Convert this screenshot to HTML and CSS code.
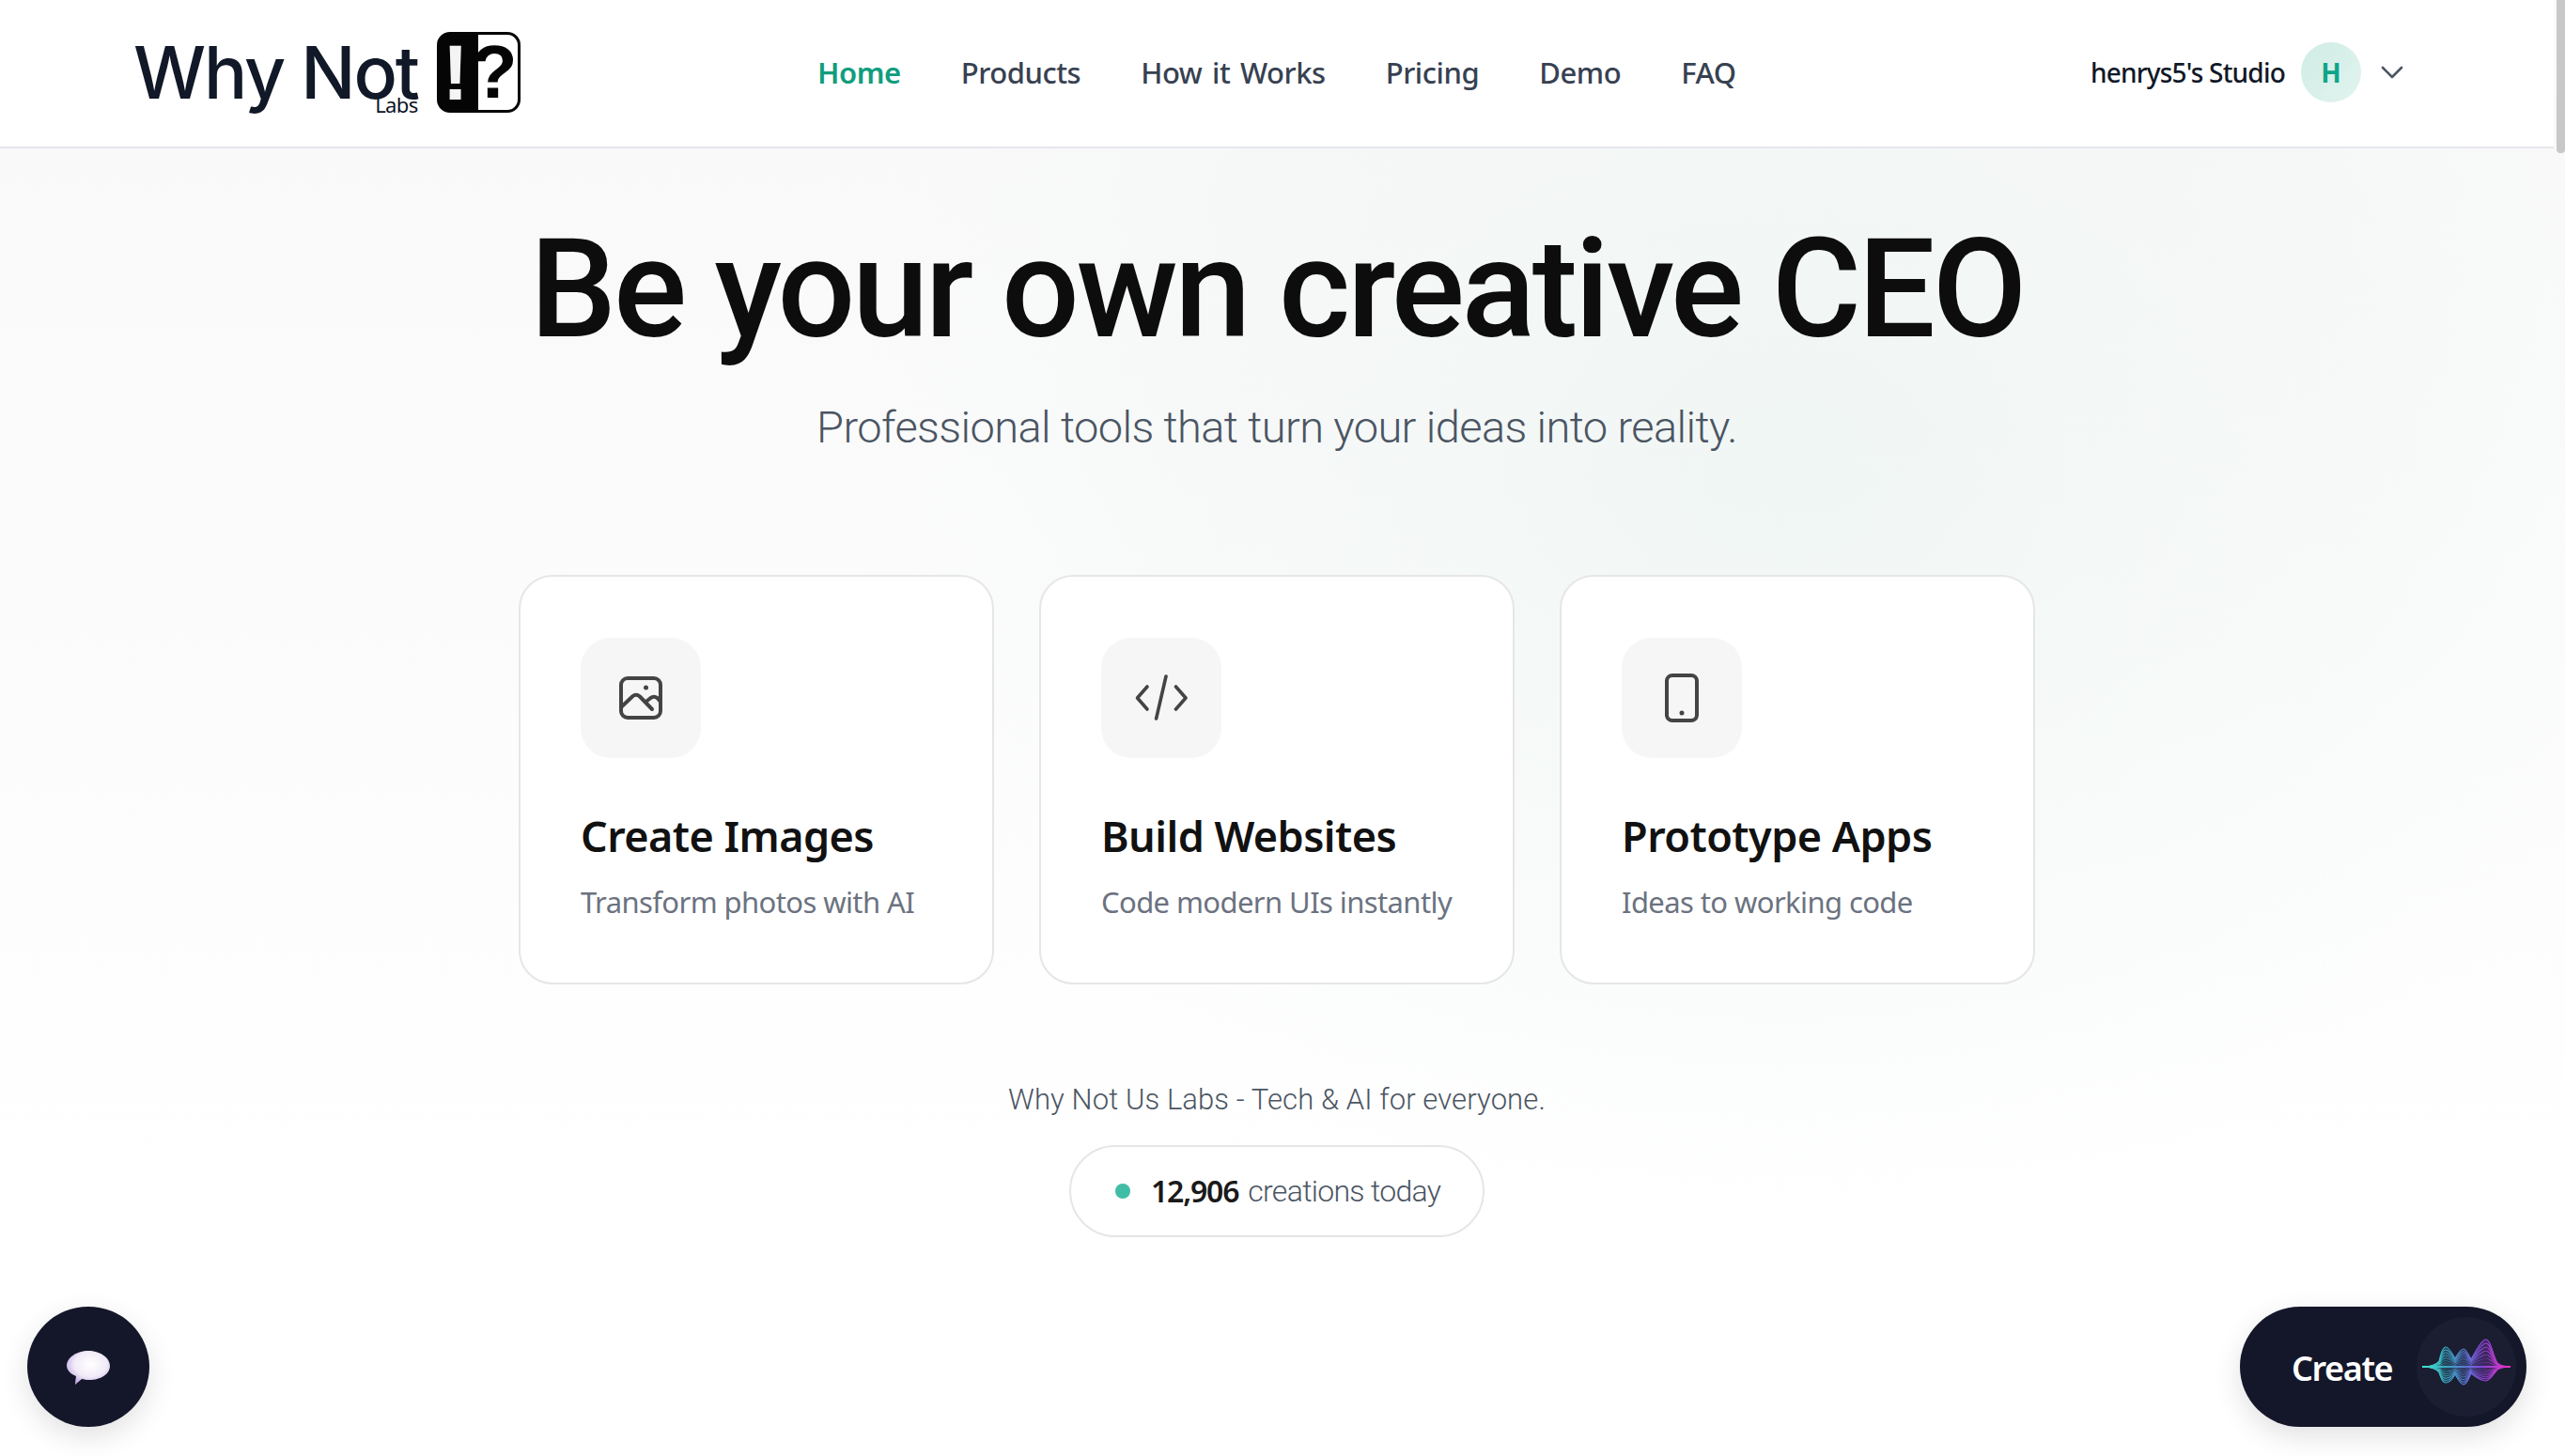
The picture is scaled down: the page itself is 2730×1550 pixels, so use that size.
FILE: index.html
```html
<!DOCTYPE html>
<html lang="en">
<head>
<meta charset="utf-8">
<title>Why Not Labs</title>
<link rel="stylesheet" href="styles.css">
</head>
<body>
<div class="page">
  <header class="header">
    <a class="logo">
      <span class="logo-word">Why Not<span class="logo-labs">Labs</span></span>
      <span class="logo-mark"><span class="mark-bang">!</span><span class="mark-query">?</span></span>
    </a>
    <nav class="nav">
      <a class="nav-link active">Home</a>
      <a class="nav-link">Products</a>
      <a class="nav-link">How it Works</a>
      <a class="nav-link">Pricing</a>
      <a class="nav-link">Demo</a>
      <a class="nav-link">FAQ</a>
    </nav>
    <div class="user">
      <span class="user-name">henrys5's Studio</span>
      <span class="avatar">H</span>
      <svg class="chevron" viewBox="0 0 24 14" fill="none" stroke="#4b5563" stroke-width="2.6" stroke-linecap="round" stroke-linejoin="round"><path d="M2 2l10 10L22 2"/></svg>
    </div>
  </header>
  <main class="main">
    <h1 class="title">Be your own creative CEO</h1>
    <p class="subtitle">Professional tools that turn your ideas into reality.</p>
    <section class="cards">
      <article class="card">
        <div class="card-icon">
          <svg class="icon" viewBox="0 0 56 56" fill="none" stroke="#444" stroke-width="4" stroke-linecap="round" stroke-linejoin="round"><rect x="7" y="7" width="42" height="42" rx="7"/><path d="M8 37l11-10.500q4-3.500 8 0L40 40"/><path d="M33.500 32l5-4q3.500-2.500 7 0l3.500 4"/><circle cx="33.500" cy="17" r="2.500" fill="#444" stroke="none"/></svg>
        </div>
        <h2 class="card-title">Create Images</h2>
        <p class="card-text">Transform photos with AI</p>
      </article>
      <article class="card">
        <div class="card-icon">
          <svg class="icon" viewBox="0 0 56 56" fill="none" stroke="#444" stroke-width="3.600" stroke-linecap="round" stroke-linejoin="round"><path d="M13 16L2.500 28 13 40"/><path d="M43.500 16L54 28 43.500 40"/><path d="M33 5L22.600 50"/></svg>
        </div>
        <h2 class="card-title">Build Websites</h2>
        <p class="card-text">Code modern UIs instantly</p>
      </article>
      <article class="card">
        <div class="card-icon">
          <svg class="icon" viewBox="0 0 56 56" fill="none" stroke="#444" stroke-width="4"><rect x="12" y="4" width="32" height="48" rx="6"/><circle cx="28" cy="44" r="2.500" fill="#444" stroke="none"/></svg>
        </div>
        <h2 class="card-title">Prototype Apps</h2>
        <p class="card-text">Ideas to working code</p>
      </article>
    </section>
    <p class="tagline">Why Not Us Labs - Tech &amp; AI for everyone.</p>
    <div class="stat"><span class="stat-dot"></span><strong class="stat-num">12,906</strong><span class="stat-label">creations today</span></div>
  </main>
  <button class="fab-chat" aria-label="Chat">
    <svg class="bubble" viewBox="0 0 46 38">
      <defs><radialGradient id="bub" cx="55%" cy="40%" r="62%"><stop offset="0" stop-color="#fff"/><stop offset=".6" stop-color="#f1ebf8"/><stop offset="1" stop-color="#bfa9e6"/></radialGradient></defs>
      <path fill="url(#bub)" d="M23 1C35 1 46 8 46 17c0 9-10 15-22 15-3 0-6-.5-8-1L9 37c0-3 .5-6 1-9C4 26 0 21 0 17 0 8 11 1 23 1z"/>
    </svg>
  </button>
  <button class="fab-create">
    <span class="create-label">Create</span>
    <span class="create-orb">
      <svg class="wave" viewBox="0 -32 94 64" fill="none">
        <defs>
          <linearGradient id="wg" gradientUnits="userSpaceOnUse" x1="0" y1="0" x2="94" y2="0"><stop offset="0" stop-color="#3fe6cf"/><stop offset=".28" stop-color="#3aa6c0"/><stop offset=".5" stop-color="#5f78d8"/><stop offset=".68" stop-color="#8a45d8"/><stop offset="1" stop-color="#ec2fc4"/></linearGradient>
          <path id="wp" d="M0 0C8 0 14-1 18-6 20-15 22-21 25-21 29-21 33-12 35-9 38-14 41-19 44-19 47-19 50-11 52-8 57-16 63-29 68-29 73-29 76-10 80-4 83-1 88 0 94 0 88 0 83 1 80 3 76 8 72 15 68 15 63 15 57 11 52 7 50 12 47 19 44 19 41 19 38 13 35 8 33 12 29 17 25 17 22 17 20 13 18 6 14 1 8 0 0 0Z"/>
        </defs>
        <path d="M0 0C8 0 14-1 18-6 20-15 22-21 25-21 29-21 33-12 35-9 38-14 41-19 44-19 47-19 50-11 52-8 57-16 63-29 68-29 73-29 76-10 80-4 83-1 88 0 94 0 88 0 83 1 80 3 76 8 72 15 68 15 63 15 57 11 52 7 50 12 47 19 44 19 41 19 38 13 35 8 33 12 29 17 25 17 22 17 20 13 18 6 14 1 8 0 0 0Z" fill="url(#wg)" opacity=".28"/>
        <g stroke="url(#wg)" stroke-width="1.100">
          <use href="#wp"/>
          <use href="#wp" transform="scale(1 .86)"/>
          <use href="#wp" transform="scale(1 .72)"/>
          <use href="#wp" transform="scale(1 .58)"/>
          <use href="#wp" transform="scale(1 .44)"/>
          <use href="#wp" transform="scale(1 .3)"/>
          <use href="#wp" transform="scale(1 .16)"/>
          <path d="M0 0H94" stroke-width="2.200"/>
        </g>
      </svg>
    </span>
  </button>
  <div class="scroll-thumb"></div>
</div>
</body>
</html>
```

FILE: styles.css
```css
* { box-sizing: border-box; }
html, body { margin: 0; padding: 0; height: 100%; overflow: hidden; }
body { font-family: "Noto Sans", "Open Sans", sans-serif; color: #111; background: #fff; }
.page {
  position: relative;
  width: 2730px;
  height: 1550px;
  padding-right: 12px;
  background:
    radial-gradient(ellipse 1000px 800px at 1900px 500px, rgba(226, 240, 236, .42), rgba(226, 240, 236, 0) 100%),
    linear-gradient(180deg, #f9f9f9 158px, #fdfdfd 900px, #ffffff 1300px);
}
.header {
  height: 158px;
  background: #fff;
  border-bottom: 2px solid #e6e6ec;
  display: grid;
  grid-template-columns: 728px auto 1fr;
  align-items: center;
  padding-left: 142px;
}
.logo { display: flex; align-items: center; gap: 20px; margin-top: -3px; }
.logo-word {
  position: relative;
  font-family: Inter, sans-serif;
  font-size: 77px;
  font-weight: 500;
  letter-spacing: -2.2px;
  line-height: 90px;
  color: #111827;
  white-space: nowrap;
}
.logo-labs {
  position: absolute;
  right: 0;
  bottom: -3px;
  font-family: "Noto Sans", sans-serif;
  font-size: 22px;
  font-weight: 400;
  letter-spacing: -.6px;
  line-height: 28px;
  color: #0b1226;
}
.logo-mark {
  width: 89px;
  height: 86px;
  border: 3px solid #050505;
  border-radius: 14px;
  background: linear-gradient(90deg, #050505 49.5%, #fff 49.5%);
  display: grid;
  grid-template-columns: 1fr 1fr;
  align-items: center;
  justify-items: center;
  font-family: "Liberation Sans", sans-serif;
  font-weight: 700;
  font-size: 84px;
  line-height: 80px;
}
.mark-bang { color: #f4f4f4; }
.mark-query { color: #050505; font-size: 80px; }
.nav { display: flex; gap: 64px; margin-top: -2px; }
.nav-link {
  font-size: 31px;
  font-weight: 500;
  color: #374151;
  letter-spacing: -.45px;
  word-spacing: 3px;
  line-height: 40px;
  white-space: nowrap;
}
.nav-link.active { color: #0f9d7e; font-weight: 600; }
.user { display: flex; align-items: center; justify-content: flex-end; padding-right: 160px; margin-top: -2px; }
.user-name { font-size: 28px; font-weight: 500; color: #111827; letter-spacing: -.8px; margin-right: 17px; white-space: nowrap; }
.avatar {
  width: 64px;
  height: 64px;
  border-radius: 50%;
  background: linear-gradient(135deg, #cfece5, #e2f4ef);
  color: #0ea588;
  font-size: 28px;
  font-weight: 700;
  display: flex;
  align-items: center;
  justify-content: center;
}
.chevron { width: 24px; height: 14px; margin-left: 21px; }
.main { display: flex; flex-direction: column; align-items: center; }
.title {
  margin: 63px 0 0;
  font-family: Roboto, sans-serif;
  font-size: 146px;
  font-weight: 500;
  line-height: 176px;
  letter-spacing: -3.4px;
  color: #0d0d0d;
  white-space: nowrap;
}
.subtitle {
  margin: 26px 0 0;
  font-family: Roboto, sans-serif;
  font-size: 47px;
  font-weight: 300;
  line-height: 64px;
  letter-spacing: -.6px;
  color: #4b5563;
}
.cards { display: flex; gap: 48px; margin-top: 125px; }
.card {
  width: 506px;
  height: 436px;
  background: #fff;
  border: 2px solid #e6e6e6;
  border-radius: 36px;
  padding: 65px 64px 0;
}
.card-icon {
  width: 128px;
  height: 128px;
  border-radius: 32px;
  background: #f6f6f6;
  display: flex;
  align-items: center;
  justify-content: center;
}
.icon { width: 56px; height: 56px; display: block; }
.card-title {
  margin: 53px 0 0;
  font-size: 45px;
  font-weight: 560;
  line-height: 60px;
  letter-spacing: -.55px;
  color: #111;
  white-space: nowrap;
}
.card-text {
  margin: 19px 0 0;
  font-size: 31px;
  font-weight: 400;
  line-height: 42px;
  letter-spacing: -.6px;
  color: #6b7280;
  white-space: nowrap;
}
.tagline {
  margin: 101px 0 0;
  font-family: Roboto, sans-serif;
  font-size: 31px;
  font-weight: 300;
  line-height: 44px;
  letter-spacing: .1px;
  color: #4b5563;
}
.stat {
  margin-top: 26px;
  width: 442px;
  height: 98px;
  border: 2px solid #e6e6e6;
  border-radius: 49px;
  background: #fff;
  display: flex;
  align-items: center;
  padding-left: 47px;
  font-size: 32px;
  line-height: 44px;
}
.stat-dot { width: 16px; height: 16px; border-radius: 50%; background: #41bda5; margin-right: 22px; }
.stat-num { font-weight: 600; color: #1a1a1a; margin-right: 10px; letter-spacing: -1.2px; }
.stat-label { font-family: Roboto, sans-serif; font-weight: 300; color: #4b5563; letter-spacing: -.7px; }
.fab-chat {
  position: absolute;
  left: 29px;
  top: 1391px;
  width: 130px;
  height: 128px;
  border: 0;
  padding: 0;
  border-radius: 50%;
  background: #14172a;
  box-shadow: 0 10px 30px rgba(0, 0, 0, .12);
  display: flex;
  align-items: center;
  justify-content: center;
}
.bubble { width: 46px; height: 38px; margin-top: 2px; }
.fab-create {
  position: absolute;
  left: 2384px;
  top: 1391px;
  width: 305px;
  height: 128px;
  border: 0;
  padding: 0 11px 0 55px;
  border-radius: 64px;
  background: #14172a;
  box-shadow: 0 10px 30px rgba(0, 0, 0, .12);
  display: flex;
  align-items: center;
  justify-content: space-between;
  font-family: inherit;
}
.create-label { font-size: 36px; font-weight: 600; color: #fff; letter-spacing: -1.4px; line-height: 48px; margin-top: 4px; }
.create-orb {
  width: 106px;
  height: 106px;
  border-radius: 50%;
  background: #1b1d31;
  display: flex;
  align-items: center;
  justify-content: center;
}
.wave { width: 94px; height: 64px; display: block; flex: none; }
.scroll-thumb {
  position: absolute;
  top: 0;
  right: 0;
  width: 9px;
  height: 163px;
  background: #c8c8c8;
  border-radius: 0 0 4px 4px;
}
```
